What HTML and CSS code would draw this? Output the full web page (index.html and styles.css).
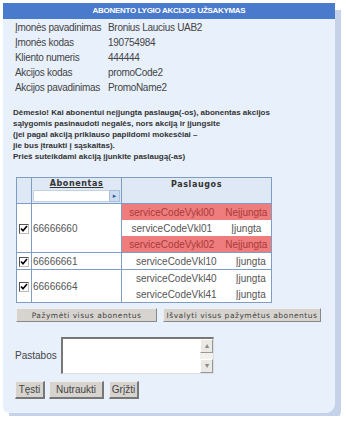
FILE: index.html
```html
<!DOCTYPE html>
<html lang="lt">
  <head>
    <meta charset="UTF-8" />
    <title>Abonento lygio akcijos užsakymas</title>
    <link rel="stylesheet" href="styles.css">
  </head>
  <body>
    <div class="panel">
      <div class="title">ABONENTO LYGIO AKCIJOS UŽSAKYMAS</div>

      <div class="info">
        <span>Įmonės pavadinimas</span><span>Bronius Laucius UAB2</span>
        <span>Įmonės kodas</span><span>190754984</span>
        <span>Kliento numeris</span><span>444444</span>
        <span>Akcijos kodas</span><span>promoCode2</span>
        <span>Akcijos pavadinimas</span><span>PromoName2</span>
      </div>

      <p class="warning">
        Dėmesio! Kai abonentui neįjungta paslauga(-os), abonentas akcijos<br>
        sąlygomis pasinaudoti negalės, nors akciją ir įjungsite<br>
        (jei pagal akciją priklauso papildomi mokesčiai –<br>
        jie bus įtraukti į sąskaitas).<br>
        Prieš suteikdami akciją įjunkite paslaugą(-as)
      </p>

      <table class="subs">
        <colgroup>
          <col class="c-check">
          <col class="c-number">
          <col class="c-services">
        </colgroup>
        <thead>
          <tr>
            <th></th>
            <th>
              <u>Abonentas</u>
              <div class="filter"><span class="filter-input"></span><span class="filter-btn">&#9656;</span></div>
            </th>
            <th class="top">Paslaugos</th>
          </tr>
        </thead>
        <tbody>
          <tr>
            <td class="check"><span class="box"><svg width="8" height="8" viewBox="0 0 8 8"><path d="M1 3.5 L3 5.8 L7 1" fill="none" stroke="#000" stroke-width="1.6"/></svg></span></td>
            <td class="number">66666660</td>
            <td class="services">
              <table class="svc">
                <tr class="off"><td>serviceCodeVykl00</td><td>Neįjungta</td></tr>
                <tr><td>serviceCodeVkl01</td><td>Įjungta</td></tr>
                <tr class="off"><td>serviceCodeVykl02</td><td>Neįjungta</td></tr>
              </table>
            </td>
          </tr>
          <tr>
            <td class="check"><span class="box"><svg width="8" height="8" viewBox="0 0 8 8"><path d="M1 3.5 L3 5.8 L7 1" fill="none" stroke="#000" stroke-width="1.6"/></svg></span></td>
            <td class="number">66666661</td>
            <td class="services">
              <table class="svc">
                <tr><td>serviceCodeVkl10</td><td>Įjungta</td></tr>
              </table>
            </td>
          </tr>
          <tr>
            <td class="check"><span class="box"><svg width="8" height="8" viewBox="0 0 8 8"><path d="M1 3.5 L3 5.8 L7 1" fill="none" stroke="#000" stroke-width="1.6"/></svg></span></td>
            <td class="number">66666664</td>
            <td class="services">
              <table class="svc">
                <tr><td>serviceCodeVkl40</td><td>Įjungta</td></tr>
                <tr><td>serviceCodeVkl41</td><td>Įjungta</td></tr>
              </table>
            </td>
          </tr>
        </tbody>
      </table>

      <div class="select-btns">
        <button class="wide">Pažymėti visus abonentus</button>
        <button class="wide">Išvalyti visus pažymėtus abonentus</button>
      </div>

      <div class="notes">
        <label>Pastabos</label>
        <div class="textarea">
          <div class="scroll">
            <span class="arrow">&#9652;</span>
            <span class="arrow">&#9662;</span>
          </div>
        </div>
      </div>

      <div class="nav">
        <button>Tęsti</button>
        <button>Nutraukti</button>
        <button>Grįžti</button>
      </div>
    </div>
  </body>
</html>
```

FILE: styles.css
```css
body {
  margin: 0;
  padding: 3px;
  background-color: #fff;
  font-family: "Liberation Sans", Arial, sans-serif;
  font-size: 10px;
  color: #444;
}
.panel {
  width: 332px;
  height: 410px;
  box-sizing: border-box;
  background-color: #e8f0fc;
  border-radius: 0 0 9px 6px;
  box-shadow: 6px 7px 0 #c4d2ea;
  padding-bottom: 13px;
}
.title {
  height: 16px;
  line-height: 16px;
  background-color: #4a7acb;
  color: #fff;
  text-align: center;
  font-weight: bold;
  font-size: 8px;
  letter-spacing: -0.3px;
}
.info {
  display: grid;
  grid-template-columns: 93px auto;
  line-height: 15px;
  padding: 1px 0 0 12px;
  letter-spacing: -0.3px;
}
.warning {
  margin: 12px 0 0 10px;
  font-weight: bold;
  font-size: 8px;
  line-height: 11px;
  color: #333;
}
.subs {
  margin: 15px 0 0 13px;
  width: 256px;
  border-collapse: collapse;
  table-layout: fixed;
  border: 1px solid #7f9cc4;
}
.c-check { width: 15px; }
.c-number { width: 90px; }
.subs th {
  background-color: #dfe9f6;
  border: 1px solid #7f9cc4;
  height: 24px;
  padding: 0;
  font-family: "DejaVu Sans", Verdana, sans-serif;
  font-size: 8px;
  letter-spacing: 0.6px;
  color: #333;
  vertical-align: top;
  line-height: 12px;
}
.subs th.top { padding-top: 1px; }
.filter {
  display: flex;
  margin: 0 1px;
  height: 12px;
}
.filter-input {
  flex: 1;
  background-color: #fff;
  border: 1px solid #c4d2e4;
  border-right: none;
}
.filter-btn {
  width: 9px;
  background-color: #cddcf0;
  border: 1px solid #aabfdc;
  color: #3560a8;
  font-size: 7px;
  line-height: 11px;
  letter-spacing: 0;
  text-align: center;
}
.subs td {
  border: 1px solid #7f9cc4;
  padding: 0;
  background-color: #fff;
  vertical-align: middle;
}
.subs td.check { text-align: center; }
.box {
  display: inline-flex;
  align-items: center;
  justify-content: center;
  width: 8px;
  height: 8px;
  border: 1px solid #555;
  border-right-color: #bbb;
  border-bottom-color: #bbb;
  background-color: #fff;
  vertical-align: middle;
}
.subs td.number { padding-left: 1px; color: #555; }
.svc {
  width: 100%;
  border-collapse: collapse;
}
.subs .svc td {
  border: none;
  height: 16px;
  text-align: center;
  background-color: #fff;
  color: #555;
}
.subs .svc tr.off td {
  background-color: #ef7d7d;
  color: #a93a3a;
}
.select-btns {
  display: flex;
  gap: 6px;
  margin: 5px 0 0 13px;
}
button {
  font-family: "Liberation Sans", Arial, sans-serif;
  font-size: 10px;
  color: #444;
  background-color: #d7d4cf;
  border: 1px solid #d7d4cf;
  border-right: 2px solid #777;
  border-bottom: 2px solid #777;
  border-left-color: #eee;
  border-top-color: #eee;
  padding: 0;
  height: 18px;
}
button.wide {
  height: 14px;
  font-family: "DejaVu Sans", Verdana, sans-serif;
  font-size: 7.5px;
  letter-spacing: 0.5px;
  border-right: 1px solid #888;
  border-bottom: 1px solid #888;
}
.select-btns button:first-child { width: 141px; }
.select-btns button:last-child { width: 158px; }
.notes {
  display: flex;
  align-items: center;
  margin: 14px 0 0 12px;
  height: 39px;
}
.notes label { width: 46px; }
.textarea {
  width: 150px;
  height: 34px;
  background-color: #fff;
  border: 2px solid #777;
  border-right: 1px solid #ddd;
  border-bottom: 1px solid #ddd;
  display: flex;
  justify-content: flex-end;
}
.scroll {
  width: 13px;
  background-color: #f2f1ee;
  display: flex;
  flex-direction: column;
  justify-content: space-between;
}
.arrow {
  height: 12px;
  background-color: #ebe9e4;
  border: 1px solid #fff;
  border-right-color: #999;
  border-bottom-color: #999;
  color: #888;
  font-size: 8px;
  line-height: 11px;
  text-align: center;
}
.nav {
  display: flex;
  gap: 4px;
  margin: 6px 0 0 12px;
}
.nav button:nth-child(1) { width: 30px; }
.nav button:nth-child(2) { width: 55px; }
.nav button:nth-child(3) { width: 30px; margin-left: 1px; }
```
